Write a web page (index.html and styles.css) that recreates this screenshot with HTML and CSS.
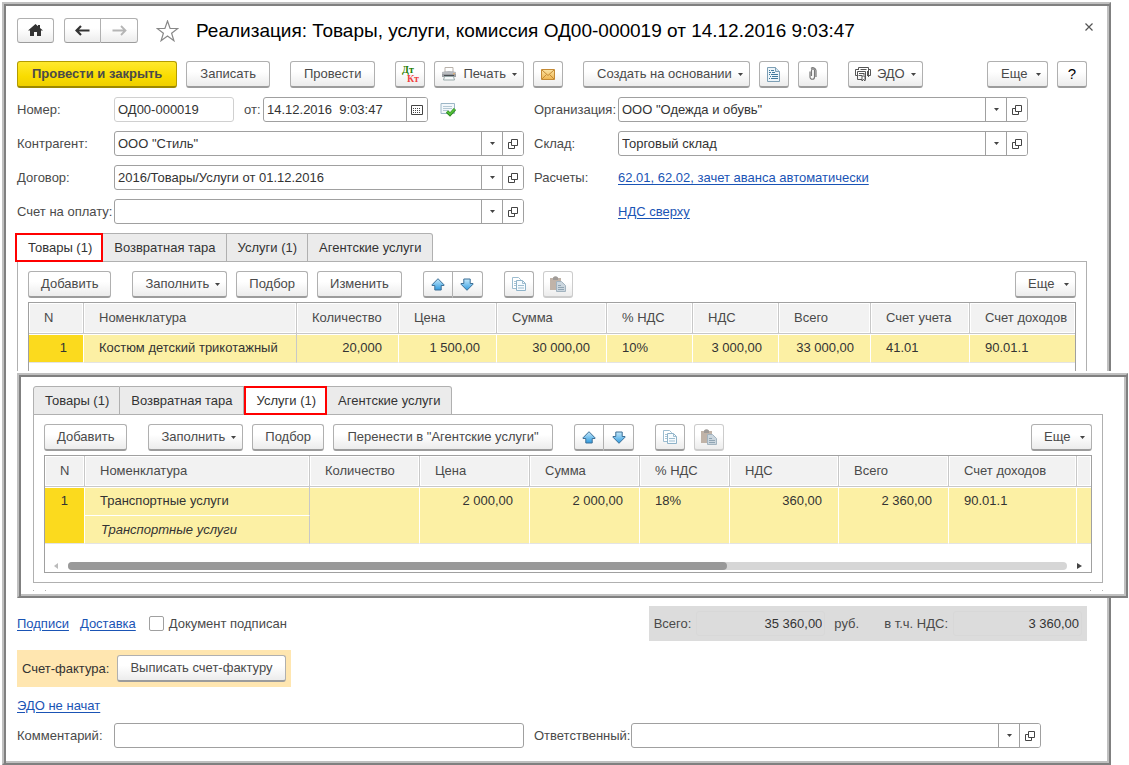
FILE: index.html
```html
<!DOCTYPE html>
<html lang="ru">
<head>
<meta charset="utf-8">
<title>Реализация: Товары, услуги, комиссия</title>
<link rel="stylesheet" href="styles.css">
</head>
<body>
<svg class="sprite" aria-hidden="true">
  <defs>
    <linearGradient id="blue" x1="0" y1="0" x2="0" y2="1"><stop offset="0" stop-color="#c5e9fb"/><stop offset="1" stop-color="#2f9be0"/></linearGradient>
    <linearGradient id="gold" x1="0" y1="0" x2="0" y2="1"><stop offset="0" stop-color="#fbe3a4"/><stop offset="1" stop-color="#eeb550"/></linearGradient>
  </defs>
  <symbol id="i-caret" viewBox="0 0 5 3"><path d="M0 0h5L2.5 3z" fill="#444"/></symbol>
  <symbol id="i-open" viewBox="0 0 10 10"><path d="M3.5.5h6v6h-6z M3.5 3.5h-3v6h6v-3" fill="none" stroke="#444"/></symbol>
  <symbol id="i-up" viewBox="0 0 14 13"><path d="M7 .7L13 6.800v.7h-2.800V12H3.800V7.500H1V6.800z" fill="url(#blue)" stroke="#3c6f96"/></symbol>
  <symbol id="i-down" viewBox="0 0 14 13"><path d="M7 12.300L13 6.200V5.500h-2.800V1H3.800v4.500H1v.7z" fill="url(#blue)" stroke="#3c6f96"/></symbol>
  <symbol id="i-copy" viewBox="0 0 16 16">
    <path d="M1.500 1.500h6l2 2v9h-8z" fill="#fff" stroke="#9dbdd0"/><path d="M3 5.500h3M3 7.500h3M3 9.500h3" stroke="#a9c4d4"/>
    <path d="M5.500 4.500h6l3 3v7h-9z" fill="#f6fbfe" stroke="#8fb3c9"/><path d="M11.500 4.500v3h3M7 9.500h6M7 12h6" fill="none" stroke="#9dbdd0"/>
  </symbol>
  <symbol id="i-paste" viewBox="0 0 16 16">
    <path d="M0 2h11v12H0z" fill="#c0b3a8"/><path d="M3 1.500Q5.500-1 8 1.500V4H3z" fill="#9f9b98"/>
    <path d="M6.500 5.500h5l4 4v6h-9z" fill="#cbd6de" stroke="#a2b3bf"/><path d="M8 9.500h3M8 11.500h6M8 13.500h6" stroke="#8fa4b3"/>
  </symbol>
</svg>

<main class="window window--main">
  <header class="titlebar">
    <button class="btn btn--sm btn--home" type="button" aria-label="Домой"><svg width="15" height="13" viewBox="0 0 15 13"><path d="M7.500 0L0 6.500h2V12h4V8h3v4h4V6.500h2L12 4V1h-2v1.300z" fill="#333"/></svg></button>
    <div class="pair pair--nav">
      <button class="btn btn--sm" type="button" aria-label="Назад"><svg width="15" height="11" viewBox="0 0 15 11"><path d="M14.500 5.500H2M6 1L1.500 5.500 6 10" fill="none" stroke="#333" stroke-width="2.200"/></svg></button>
      <button class="btn btn--sm" type="button" aria-label="Вперед"><svg width="15" height="11" viewBox="0 0 15 11"><path d="M.5 5.500H13M9 1l4.500 4.500L9 10" fill="none" stroke="#b5b5b5" stroke-width="1.800"/></svg></button>
    </div>
    <svg class="star" width="23" height="22" viewBox="0 0 23 22"><path d="M11.500 1l2.600 7.500h7.700l-6.200 4.700 2.300 7.500-6.400-4.600-6.400 4.600 2.300-7.500L1.200 8.500h7.700z" fill="#fff" stroke="#888" stroke-width="1.200"/></svg>
    <h1 class="title">Реализация: Товары, услуги, комиссия ОД00-000019 от 14.12.2016 9:03:47</h1>
    <button class="close" type="button" aria-label="Закрыть"><svg width="8" height="8" viewBox="0 0 8 8"><path d="M.5.5l7 7M7.500.5l-7 7" stroke="#555" stroke-width="1.200"/></svg></button>
  </header>

  <div class="toolbar toolbar--main">
    <button class="btn btn--primary" type="button">Провести и закрыть</button>
    <button class="btn" type="button">Записать</button>
    <button class="btn gap" type="button">Провести</button>
    <button class="btn btn--icon gap" type="button" aria-label="Дт Кт"><span class="dtkt"><span class="dt">Дт</span><span class="kt">Кт</span></span></button>
    <button class="btn btn--drop btn--lead" type="button"><svg width="16" height="14" viewBox="0 0 16 14"><path d="M4 .5h8v5H4z" fill="#fff" stroke="#b9b2ab"/><path d="M1 5q7-1.500 14 0v5H1z" fill="#9b9ea3"/><path d="M1 6h14" stroke="#d5d7da"/><path d="M3 8h10v1.500H3z" fill="#4a4d52"/><path d="M3.500 9.500h9l1 3.500h-11z" fill="#f6f8fa" stroke="#9aa"/><path d="M12 6.800h2" stroke="#e8a860"/></svg>Печать<svg class="caret"><use href="#i-caret"/></svg></button>
    <button class="btn btn--icon" type="button" aria-label="Письмо"><svg width="14" height="11" viewBox="0 0 14 11"><path d="M.5.500h13v10H.5z" fill="url(#gold)" stroke="#c48a35"/><path d="M1 1l6 5.500L13 1M1 10l4.500-4.500M13 10L8.500 5.500" fill="none" stroke="#c48a35"/></svg></button>
    <button class="btn btn--drop gap" type="button">Создать на основании<svg class="caret"><use href="#i-caret"/></svg></button>
    <button class="btn btn--icon" type="button" aria-label="Отчет"><svg width="13" height="15" viewBox="0 0 13 15"><path d="M.5.500h8l4 4v10H.5z" fill="#edf5fa" stroke="#7d9fb5"/><path d="M8.500.5v4h4" fill="#d0e2ee" stroke="#7d9fb5"/><path d="M2 3.500h1M4 3.500h3M2 5.500h2M5 5.500h3M2 7.500h1M4 7.500h7M3 9.500h1M5 9.500h6M2 11.500h1M4 11.500h7" stroke="#41799c"/></svg></button>
    <button class="btn btn--icon" type="button" aria-label="Вложения"><svg width="8" height="14" viewBox="0 0 8 14"><path d="M2.500 9V3.500a1.400 1.400 0 0 1 3 0V10a2.200 2.200 0 0 1-4.500 0V4.500M7 10V3.500A3 3 0 0 0 2 1.500" fill="none" stroke="#777" stroke-width="1.200"/></svg></button>
    <button class="btn btn--drop btn--lead gap" type="button"><svg width="16" height="15" viewBox="0 0 16 15"><path d="M3.500 3V.5h10V10M13.500 2.500h2v6h-2M3.500 2.500h-3v6h3M2.500 4.500h8v8h-8zM4 6.500h5M4 8.500h3M5.500 2.500h6M12.500 4v5" fill="none" stroke="#555"/><path d="M7 9h3v5l-1.500-1.500L7 14zM8 7h3" fill="#fff" stroke="#555"/></svg>ЭДО<svg class="caret"><use href="#i-caret"/></svg></button>
    <button class="btn btn--drop btn--more push" type="button">Еще<svg class="caret"><use href="#i-caret"/></svg></button>
    <button class="btn btn--icon btn--help" type="button">?</button>
  </div>

  <div class="form">
    <label for="num">Номер:</label>
    <div class="line">
      <input class="box box--num" id="num" value="ОД00-000019">
      <label class="from" for="date">от:</label>
      <div class="field field--date"><input id="date" value="14.12.2016  9:03:47"><button type="button" aria-label="Календарь"><svg width="12" height="10" viewBox="0 0 12 10"><path d="M.5.500h11v9H.5z" fill="#fff" stroke="#444"/><path d="M2 3.500h8M2 5.500h8M2 7.500h8" stroke="#444" stroke-dasharray="1 1"/></svg></button></div>
      <svg class="posted" width="16" height="14" viewBox="0 0 16 14"><path d="M1 .5h13.500v10H1z" fill="#f3f8fb" stroke="#9cb6c6"/><path d="M3 3.500h9M3 5.500h9M3 7.500h5" stroke="#b4c8d4"/><path d="M7 8.500l3 3 5-5.500" fill="none" stroke="#2d8b1f" stroke-width="3.200"/><path d="M7.200 8.500l2.800 2.600 4.700-5" fill="none" stroke="#55c13a" stroke-width="1.600"/></svg>
    </div>
    <label for="org">Организация:</label>
    <div class="field"><input id="org" value="ООО &quot;Одежда и обувь&quot;"><button type="button" aria-label="Выбрать"><svg class="caret"><use href="#i-caret"/></svg></button><button type="button" aria-label="Открыть"><svg class="open"><use href="#i-open"/></svg></button></div>

    <label for="agent">Контрагент:</label>
    <div class="field"><input id="agent" value="ООО &quot;Стиль&quot;"><button type="button" aria-label="Выбрать"><svg class="caret"><use href="#i-caret"/></svg></button><button type="button" aria-label="Открыть"><svg class="open"><use href="#i-open"/></svg></button></div>
    <label for="store">Склад:</label>
    <div class="field"><input id="store" value="Торговый склад"><button type="button" aria-label="Выбрать"><svg class="caret"><use href="#i-caret"/></svg></button><button type="button" aria-label="Открыть"><svg class="open"><use href="#i-open"/></svg></button></div>

    <label for="contract">Договор:</label>
    <div class="field"><input id="contract" value="2016/Товары/Услуги от 01.12.2016"><button type="button" aria-label="Выбрать"><svg class="caret"><use href="#i-caret"/></svg></button><button type="button" aria-label="Открыть"><svg class="open"><use href="#i-open"/></svg></button></div>
    <span>Расчеты:</span>
    <div><a href="#">62.01, 62.02, зачет аванса автоматически</a></div>

    <label for="bill">Счет на оплату:</label>
    <div class="field"><input id="bill"><button type="button" aria-label="Выбрать"><svg class="caret"><use href="#i-caret"/></svg></button><button type="button" aria-label="Открыть"><svg class="open"><use href="#i-open"/></svg></button></div>
    <span></span>
    <div><a href="#">НДС сверху</a></div>
  </div>

  <section class="book book--goods">
    <div class="tabs" role="tablist">
      <button class="tab tab--active" role="tab" aria-selected="true" type="button">Товары (1)</button>
      <button class="tab" role="tab" type="button">Возвратная тара</button>
      <button class="tab" role="tab" type="button">Услуги (1)</button>
      <button class="tab" role="tab" type="button">Агентские услуги</button>
    </div>
    <div class="pane pane--cut">
      <div class="toolbar toolbar--list">
        <button class="btn" type="button">Добавить</button>
        <button class="btn btn--drop gap" type="button">Заполнить<svg class="caret"><use href="#i-caret"/></svg></button>
        <button class="btn" type="button">Подбор</button>
        <button class="btn" type="button">Изменить</button>
        <div class="pair gap">
          <button class="btn btn--icon" type="button" aria-label="Вверх"><svg class="arrow"><use href="#i-up"/></svg></button>
          <button class="btn btn--icon" type="button" aria-label="Вниз"><svg class="arrow"><use href="#i-down"/></svg></button>
        </div>
        <button class="btn btn--icon gap" type="button" aria-label="Копировать"><svg class="ico"><use href="#i-copy"/></svg></button>
        <button class="btn btn--icon btn--off" type="button" aria-label="Вставить"><svg class="ico"><use href="#i-paste"/></svg></button>
        <button class="btn btn--drop btn--more push" type="button">Еще<svg class="caret"><use href="#i-caret"/></svg></button>
      </div>
      <div class="grid grid--cut">
        <table>
          <colgroup><col class="w55"><col class="w213"><col class="w102"><col class="w98"><col class="w110"><col class="w86"><col class="w86"><col class="w92"><col class="w99"><col></colgroup>
          <thead><tr><th>N</th><th>Номенклатура</th><th>Количество</th><th>Цена</th><th>Сумма</th><th>% НДС</th><th>НДС</th><th>Всего</th><th>Счет учета</th><th>Счет доходов</th></tr></thead>
          <tbody>
            <tr class="row"><td class="mark r">1</td><td class="main">Костюм детский трикотажный</td><td class="r">20,000</td><td class="r">1 500,00</td><td class="r">30 000,00</td><td>10%</td><td class="r">3 000,00</td><td class="r">33 000,00</td><td>41.01</td><td>90.01.1</td></tr>
          </tbody>
        </table>
      </div>
    </div>
  </section>

  <section class="window window--over">
    <div class="book">
      <div class="tabs" role="tablist">
        <button class="tab" role="tab" type="button">Товары (1)</button>
        <button class="tab" role="tab" type="button">Возвратная тара</button>
        <button class="tab tab--active" role="tab" aria-selected="true" type="button">Услуги (1)</button>
        <button class="tab" role="tab" type="button">Агентские услуги</button>
      </div>
      <div class="pane">
        <div class="toolbar toolbar--list">
          <button class="btn" type="button">Добавить</button>
          <button class="btn btn--drop gap" type="button">Заполнить<svg class="caret"><use href="#i-caret"/></svg></button>
          <button class="btn" type="button">Подбор</button>
          <button class="btn btn--wide" type="button">Перенести в "Агентские услуги"</button>
          <div class="pair gap">
            <button class="btn btn--icon" type="button" aria-label="Вверх"><svg class="arrow"><use href="#i-up"/></svg></button>
            <button class="btn btn--icon" type="button" aria-label="Вниз"><svg class="arrow"><use href="#i-down"/></svg></button>
          </div>
          <button class="btn btn--icon gap" type="button" aria-label="Копировать"><svg class="ico"><use href="#i-copy"/></svg></button>
          <button class="btn btn--icon btn--off" type="button" aria-label="Вставить"><svg class="ico"><use href="#i-paste"/></svg></button>
          <button class="btn btn--drop btn--more push" type="button">Еще<svg class="caret"><use href="#i-caret"/></svg></button>
        </div>
        <div class="grid">
          <table>
            <colgroup><col class="w40"><col class="w225"><col class="w110"><col class="w110"><col class="w110"><col class="w90"><col class="w109"><col class="w110"><col class="w128"><col></colgroup>
            <thead><tr><th>N</th><th>Номенклатура</th><th>Количество</th><th>Цена</th><th>Сумма</th><th>% НДС</th><th>НДС</th><th>Всего</th><th>Счет доходов</th><th></th></tr></thead>
            <tbody>
              <tr class="row"><td class="mark r" rowspan="2">1</td><td class="main">Транспортные услуги</td><td rowspan="2"></td><td class="r" rowspan="2">2 000,00</td><td class="r" rowspan="2">2 000,00</td><td rowspan="2">18%</td><td class="r" rowspan="2">360,00</td><td class="r" rowspan="2">2 360,00</td><td rowspan="2">90.01.1</td><td rowspan="2"></td></tr>
              <tr class="row row--sub"><td class="main">Транспортные услуги</td></tr>
            </tbody>
          </table>
          <div class="scroll">
            <svg width="4" height="6" viewBox="0 0 4 6"><path d="M4 0v6L0 3z" fill="#bbb"/></svg>
            <div class="track"><div class="thumb"></div></div>
            <svg width="5" height="6" viewBox="0 0 5 6"><path d="M0 0v6l5-3z" fill="#444"/></svg>
          </div>
        </div>
      </div>
    </div>
    <div class="ticks"><div></div></div>
  </section>

  <footer class="footer">
    <div class="sign">
      <a href="#">Подписи</a>
      <a href="#">Доставка</a>
      <label class="check"><input type="checkbox">Документ подписан</label>
      <div class="totals">
        <label for="sum">Всего:</label><input id="sum" value="35 360,00" readonly>
        <span class="cur">руб.</span>
        <label for="vat">в т.ч. НДС:</label><input id="vat" value="3 360,00" readonly>
      </div>
    </div>
    <div class="invoice"><span>Счет-фактура:</span><button class="btn" type="button">Выписать счет-фактуру</button></div>
    <div class="edo"><a href="#">ЭДО не начат</a></div>
    <div class="form form--last">
      <label for="note">Комментарий:</label>
      <div class="field"><input id="note"></div>
      <label for="resp">Ответственный:</label>
      <div class="field"><input id="resp"><button type="button" aria-label="Выбрать"><svg class="caret"><use href="#i-caret"/></svg></button><button type="button" aria-label="Открыть"><svg class="open"><use href="#i-open"/></svg></button></div>
    </div>
  </footer>
</main>
</body>
</html>
```

FILE: styles.css
```css
* { box-sizing: border-box; }

body {
  margin: 0;
  background: #fff;
  color: #4a4a4a;
  font: 13px/16px "Liberation Sans", Arial, sans-serif;
}

button, input { font: inherit; color: inherit; margin: 0; }
svg { flex: none; display: block; }
a { color: #1a54b5; text-decoration: underline; text-underline-offset: 2px; }

.sprite { position: absolute; width: 0; height: 0; }
.caret { width: 5px; height: 3px; }
.open { width: 10px; height: 10px; }
.arrow { width: 14px; height: 13px; }
.ico { width: 16px; height: 16px; }

/* Two-tone ridge frame */
.window {
  border: 2px solid;
  border-color: #c0c0c0 #808080 #808080 #c0c0c0;
  background: #fff;
  box-shadow: inset 2px 2px #808080, inset -2px -2px #c0c0c0;
}
.window--main { margin: 2px 18px 0 2px; padding: 14px 22px 15px 13px; }

/* Title */
.titlebar { display: flex; align-items: center; height: 25px; margin-bottom: 18px; }
.title { margin: 0 auto 0 17px; font-size: 19px; line-height: 25px; font-weight: 400; color: #000; white-space: nowrap; }
.star { margin-left: 18px; }
.close { align-self: flex-start; margin: 1px -10px 0 0; padding: 4px; border: 0; background: none; }

/* Buttons */
.btn {
  display: inline-flex;
  align-items: center;
  justify-content: center;
  height: 27px;
  padding: 0 13px;
  border: 1px solid #b0b0b0;
  border-bottom: 2px solid #9c9c9c;
  border-radius: 3px;
  background: linear-gradient(#fff 40%, #ececec);
  color: #4a4a4a;
  white-space: nowrap;
}
.btn--primary { padding: 0 14px; border-color: #b39c00 #b39c00 #9c8800; background: linear-gradient(#ffe92e, #f9dc00 60%, #efcf00); font-weight: 700; }
.toolbar--list .btn, .invoice .btn { padding: 0 12px; }
.btn--drop, .toolbar--list .btn--drop { padding-right: 6px; gap: 6px; }
.btn--lead { padding-left: 6px; }
.btn--more { width: 61px; justify-content: space-between; }
.btn--wide { min-width: 220px; }
.btn--icon, .toolbar--list .btn--icon { width: 30px; padding: 0; }
.btn--off { border-color: #ccc; }
.btn--help { color: #000; font-size: 15px; }
.btn--sm { height: 25px; padding: 0; border-width: 1px; }
.btn--home { width: 37px; margin-right: 10px; }

.pair { display: flex; }
.pair .btn:first-child { border-radius: 3px 0 0 3px; }
.pair .btn:last-child { border-radius: 0 3px 3px 0; border-left: 0; }
.pair--nav .btn { width: 37px; }

.dtkt { display: grid; font: 700 10px/9px "Liberation Serif", serif; }
.dt { color: #1f7d00; margin-right: 5px; }
.kt { color: #f04040; margin-left: 5px; }

.toolbar { display: flex; gap: 9px; }
.toolbar .gap { margin-left: 11px; }
.toolbar--list .gap { margin-left: 12px; }
.toolbar .push { margin-left: auto; }

/* Fields */
.form {
  display: grid;
  grid-template-columns: 97px minmax(0, 410px) 94px minmax(0, 410px);
  align-items: center;
  row-gap: 9px;
  margin: 9px 0;
}
.form > :nth-child(4n + 3) { padding-left: 10px; }
.form > * { min-height: 25px; line-height: 25px; white-space: nowrap; }
.line { display: flex; align-items: center; }
.box, .field { height: 25px; border: 1px solid #a0a0a0; border-radius: 3px; background: #fff; }
.box { padding: 0 3px; color: #333; }
.box--num { width: 120px; border-color: #d0d0d0; }
.from { width: 29px; padding-left: 10px; }
.field { display: flex; overflow: hidden; }
.field input { flex: 1; min-width: 0; padding: 0 3px; border: 0; outline: 0; background: none; color: #333; white-space: pre; }
.field button { display: flex; align-items: center; justify-content: center; width: 21px; padding: 0; border: 0; border-left: 1px solid #a0a0a0; background: #fff; }
.field--date { width: 165px; }
.posted { margin-left: 12px; }

/* Tabs */
.tabs { display: flex; position: relative; }
.tab {
  height: 29px;
  margin-bottom: -1px;
  padding: 0 10px 0 11px;
  border: 1px solid #b0b0b0;
  border-left-width: 0;
  background: #ebebeb;
  color: #333;
  white-space: nowrap;
}
.tab:first-child { border-left-width: 1px; border-radius: 3px 0 0 0; }
.tab:last-child { border-radius: 0 3px 0 0; }
.tab--active, .tab--active:first-child { padding-right: 9px; border: 2px solid #f00; border-radius: 0; background: #fff; }
.tab--active:first-child { margin-left: -2px; }
.pane { padding: 9px 10px; border: 1px solid #b0b0b0; }
.pane--cut { padding-bottom: 0; border-bottom: 0; }

/* Tables */
.grid { margin-top: 4px; border: 1px solid #a0a0a0; }
.grid--cut { height: 69px; border-bottom: 0; }
table { width: 100%; table-layout: fixed; border-collapse: separate; border-spacing: 0; }
th, td { padding: 0 15px; text-align: left; font-weight: 400; white-space: nowrap; overflow: hidden; }
th {
  height: 31px;
  border-right: 1px solid #c8c8c8;
  border-bottom: 1px solid #c8c8c8;
  background: #f2f2f2;
  box-shadow: inset 0 0 0 1px #fff;
}
td { height: 29px; padding-right: 16px; border-right: 1px solid #fff; border-bottom: 1px solid #e4e4e4; background: #fcf0a4; color: #333; box-shadow: inset 0 1px #fff; }
th:last-child, .row:first-child td:last-child { border-right: 0; }
th:last-child { padding-right: 0; }
td.r { text-align: right; }
td.main { border-right-color: #c8c8c8; }
td.mark { background: #fbda1e; }
td[rowspan] { vertical-align: top; padding-top: 6px; }
td[rowspan] + td.main { border-bottom-color: #fff; }
.row--sub td.main { height: 28px; font-style: italic; padding-left: 16px; box-shadow: none; }

.w40 { width: 40px; } .w55 { width: 55px; } .w86 { width: 86px; } .w90 { width: 90px; }
.w92 { width: 92px; } .w98 { width: 98px; } .w99 { width: 99px; } .w102 { width: 102px; }
.w109 { width: 109px; } .w110 { width: 110px; } .w128 { width: 128px; } .w213 { width: 213px; } .w225 { width: 225px; }

.scroll { display: flex; align-items: center; gap: 10px; margin-top: 16px; padding: 2px 9px; }
.track { flex: 1; height: 8px; border-radius: 4px; background: #d6d6d6; }
.thumb { width: 66%; height: 8px; border-radius: 4px; background: #999; }

/* Overlapping window with the services tab */
.window--over {
  position: relative;
  margin: 2px -41px 8px 0;
  padding: 11px 23px 5px 14px;
  box-shadow: inset 2px 2px #808080, inset -2px -2px #c0c0c0, 0 -2px #fff;
}
.ticks { height: 1px; margin-top: 7px; padding: 0 11px; border: solid #b0b0b0; border-width: 0 1px; }
.ticks div { height: 1px; border: solid #b0b0b0; border-width: 0 1px; }

/* Footer */
.sign { display: flex; align-items: center; gap: 11px; }
.check { display: flex; align-items: center; gap: 5px; margin-left: 2px; }
.check input { appearance: none; width: 15px; height: 15px; border: 1px solid #a0a0a0; border-radius: 2px; background: #fff; }
.totals { display: flex; align-items: center; height: 35px; margin-left: auto; padding: 0 5px; background: #dcdcdc; }
.totals input { width: 129px; height: 25px; margin-left: 5px; padding: 0 2px; border: 1px solid #d8d8d8; border-radius: 3px; background: none; color: #333; text-align: right; }
.totals .cur { padding: 0 25px 0 9px; }
.invoice { display: inline-flex; align-items: center; gap: 8px; height: 37px; margin-top: 9px; padding: 0 5px; background: #ffe6b0; color: #333; }
.edo { margin-top: 11px; }
.form--last { grid-template-columns: 97px minmax(0, 410px) 107px minmax(0, 410px); margin-bottom: 0; }
```
